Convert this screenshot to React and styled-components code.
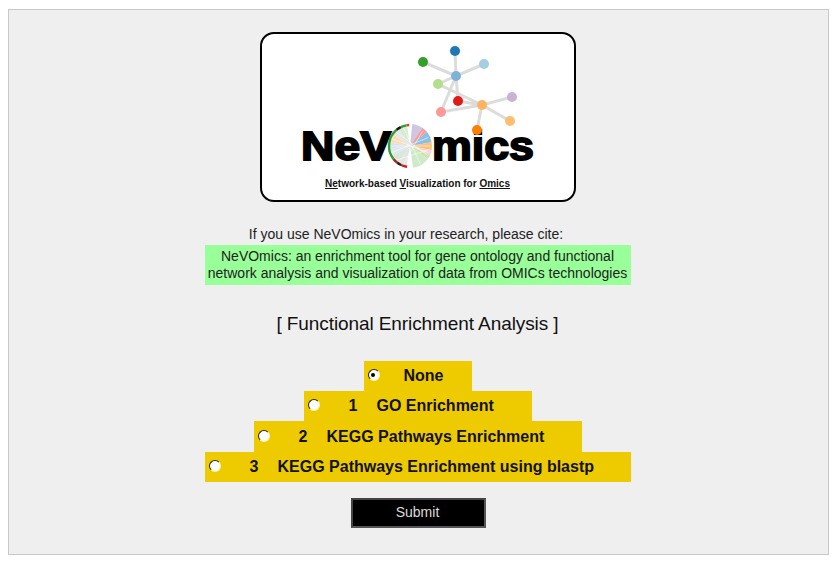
import { useState } from 'react';
import styled, { createGlobalStyle } from 'styled-components';

const GlobalStyle = createGlobalStyle`
  html, body {
    margin: 0;
    background: #fff;
  }
  body {
    font-family: "Liberation Sans", Arial, sans-serif;
    color: #111;
  }
`;

const Panel = styled.form`
  box-sizing: border-box;
  width: 821px;
  height: 546px;
  margin: 9px 0 0 8px;
  padding: 22px 2px 0 0;
  background: #efefef;
  border: 1px solid #c8c8c8;
  display: flex;
  flex-direction: column;
  align-items: center;
`;

const LogoCard = styled.div`
  box-sizing: border-box;
  width: 316px;
  height: 170px;
  background: #fff;
  border: 2px solid #000;
  border-radius: 14px;
  display: flex;
  flex-direction: column;
  align-items: center;
`;

const LogoArt = styled.svg`
  display: block;
  width: 312px;
  height: 142px;
`;

const LogoWord = styled.text`
  font-family: "Liberation Sans", Arial, sans-serif;
  font-weight: 700;
  font-size: 40px;
  fill: #000;
  stroke: #000;
  stroke-width: 1.8px;
`;

const Tagline = styled.div`
  font-size: 10px;
  font-weight: 700;
  line-height: 16px;
  color: #111;

  u {
    text-decoration-thickness: 1px;
  }
`;

const CiteIntro = styled.div`
  margin-top: 22px;
  padding-right: 23px;
  font-size: 14px;
  line-height: 20px;
  color: #222;
`;

const Citation = styled.div`
  box-sizing: border-box;
  width: 426px;
  height: 40px;
  margin-top: 1px;
  padding-top: 3px;
  background: #99ff99;
  font-size: 14px;
  line-height: 17px;
  text-align: center;
  color: #222;
`;

const Heading = styled.h2`
  margin: 27px 0 0;
  font-size: 19px;
  font-weight: 400;
  letter-spacing: -0.09px;
  line-height: 24px;
  color: #111;
`;

const Options = styled.div`
  margin-top: 25px;
  display: flex;
  flex-direction: column;
  align-items: center;
`;

const OptionRow = styled.label`
  box-sizing: border-box;
  width: ${(p) => p.$width}px;
  height: ${(p) => p.$height || 30}px;
  padding-left: 4px;
  background: #eeca00;
  display: flex;
  align-items: center;
  font-size: 16px;
  font-weight: 700;
  color: #111;
`;

const Radio = styled.input.attrs({ type: 'radio', name: 'analysis' })`
  appearance: none;
  box-sizing: border-box;
  flex: none;
  width: 12px;
  height: 12px;
  margin: -2px ${(p) => p.$gap || 29}px 0 0;
  border-radius: 50%;
  background: #fff;
  border: 1.5px solid #222;
  border-right-color: #fff2a0;
  border-bottom-color: #fff2a0;
  position: relative;

  &:checked::after {
    content: '';
    position: absolute;
    left: 2.5px;
    top: 2.5px;
    width: 4px;
    height: 4px;
    border-radius: 50%;
    background: #000;
  }
`;

const OptionNumber = styled.span`
  width: 28px;
  flex: none;
`;

const SubmitButton = styled.button`
  box-sizing: border-box;
  width: 135px;
  height: 30px;
  margin: 16px 0 0 2px;
  padding: 0 2px 2px 0;
  background: #000;
  color: #dcdcdc;
  border: 2px solid #555;
  border-top-color: #444;
  border-left-color: #444;
  font-family: "Liberation Sans", Arial, sans-serif;
  font-size: 14px;
`;

// node positions read off the logo
const nodes = {
  hub: [194, 42, '#7fb2d9'],
  top: [193, 17, '#1f78b4'],
  green: [161, 28, '#33a02c'],
  sky: [222, 30, '#a6cee3'],
  lime: [176, 50, '#b2df8a'],
  red: [196, 67, '#e31a1c'],
  amber: [220, 71, '#fdb462'],
  purple: [250, 63, '#cab2d6'],
  pink: [179, 78, '#fb9a99'],
  peach: [248, 87, '#fdbf6f'],
  orange: [215, 96, '#ff7f00'],
};

const edges = [
  ['hub', 'top'], ['hub', 'green'], ['hub', 'sky'], ['hub', 'lime'], ['hub', 'red'], ['hub', 'pink'],
  ['lime', 'amber'], ['red', 'amber'], ['pink', 'amber'], ['amber', 'purple'], ['amber', 'peach'], ['amber', 'orange'],
];

const CX = 148;
const CY = 112;

const polar = (r, deg) => {
  const a = ((deg - 90) * Math.PI) / 180;
  return [CX + r * Math.cos(a), CY + r * Math.sin(a)];
};

const wedge = (r, from, to) => {
  const [x1, y1] = polar(r, from);
  const [x2, y2] = polar(r, to);
  return `M${CX} ${CY}L${x1} ${y1}A${r} ${r} 0 ${to - from > 180 ? 1 : 0} 1 ${x2} ${y2}Z`;
};

const arc = (r, from, to) => {
  const [x1, y1] = polar(r, from);
  const [x2, y2] = polar(r, to);
  return `M${x1} ${y1}A${r} ${r} 0 0 1 ${x2} ${y2}`;
};

const sectors = [
  [6, 34, '#cfc6e4'],
  [34, 50, '#fb9a99'],
  [50, 80, '#8fbfe0'],
  [80, 101, '#fdc27a'],
  [101, 114, '#fbcfe0'],
  [114, 126, '#c9e6a6'],
  [126, 172, '#cdebc8'],
];

const paleWedges = [
  [190, 215, '#e4e4e4'],
  [215, 240, '#d8e8d8'],
  [240, 262, '#dfe7ee'],
  [262, 280, '#d5e3ee'],
  [280, 305, '#fbdcb8'],
  [305, 325, '#e6e6e6'],
  [325, 352, '#d5ecd0'],
];

const ribbons = [
  [200, 40], [225, 100], [250, 65], [270, 90], [292, 110], [315, 118], [340, 150],
];

const ringParts = [
  [188, 205, '#d01c1f'],
  [205, 218, '#222'],
  [218, 232, '#b32020'],
  [232, 320, '#2f9e2a'],
  [320, 334, '#1a1a1a'],
  [334, 350, '#2f9e2a'],
  [350, 358, '#e04040'],
];

const LogoDrawing = () => (
  <LogoArt viewBox="0 0 312 142">
    <LogoWord x="39" y="126" textLength="90" lengthAdjust="spacingAndGlyphs">NeV</LogoWord>
    <LogoWord x="170" y="126" textLength="102" lengthAdjust="spacingAndGlyphs">mics</LogoWord>
    {edges.map(([a, b]) => (
      <line
        key={a + b}
        x1={nodes[a][0]}
        y1={nodes[a][1]}
        x2={nodes[b][0]}
        y2={nodes[b][1]}
        stroke="#dcdcdc"
        strokeWidth="3"
      />
    ))}
    {Object.entries(nodes).map(([id, [x, y, fill]]) => (
      <circle key={id} cx={x} cy={y} r="5" fill={fill} />
    ))}
    {paleWedges.map(([from, to, fill]) => (
      <path key={from} d={wedge(20, from, to)} fill={fill} />
    ))}
    {sectors.map(([from, to, fill]) => (
      <path key={from} d={wedge(22, from, to)} fill={fill} />
    ))}
    {ribbons.map(([from, to]) => {
      const [x1, y1] = polar(20, from);
      const [x2, y2] = polar(20, to);
      return <line key={from} x1={x1} y1={y1} x2={x2} y2={y2} stroke="#fff" strokeWidth="0.7" opacity="0.8" />;
    })}
    {ringParts.map(([from, to, stroke]) => (
      <path key={from} d={arc(21, from, to)} fill="none" stroke={stroke} strokeWidth="2.4" />
    ))}
  </LogoArt>
);

const options = [
  { value: 'none', width: 108, gap: 24, label: 'None' },
  { value: '1', width: 228, number: '1', label: 'GO Enrichment' },
  { value: '2', width: 328, height: 31, number: '2', label: 'KEGG Pathways Enrichment' },
  { value: '3', width: 426, number: '3', label: 'KEGG Pathways Enrichment using blastp' },
];

const App = () => {
  const [selected, setSelected] = useState('none');

  return (
    <>
      <GlobalStyle />
      <Panel onSubmit={(e) => e.preventDefault()}>
        <LogoCard>
          <LogoDrawing />
          <Tagline>
            <u>Ne</u>twork-based <u>V</u>isualization for <u>Omics</u>
          </Tagline>
        </LogoCard>

        <CiteIntro>If you use NeVOmics in your research, please cite:</CiteIntro>
        <Citation>
          NeVOmics: an enrichment tool for gene ontology and functional
          <br />
          network analysis and visualization of data from OMICs technologies
        </Citation>

        <Heading>[ Functional Enrichment Analysis ]</Heading>

        <Options>
          {options.map((o) => (
            <OptionRow key={o.value} $width={o.width} $height={o.height}>
              <Radio
                $gap={o.gap}
                value={o.value}
                checked={selected === o.value}
                onChange={() => setSelected(o.value)}
              />
              {o.number && <OptionNumber>{o.number}</OptionNumber>}
              <span>{o.label}</span>
            </OptionRow>
          ))}
        </Options>

        <SubmitButton type="submit">Submit</SubmitButton>
      </Panel>
    </>
  );
};

export default App;
